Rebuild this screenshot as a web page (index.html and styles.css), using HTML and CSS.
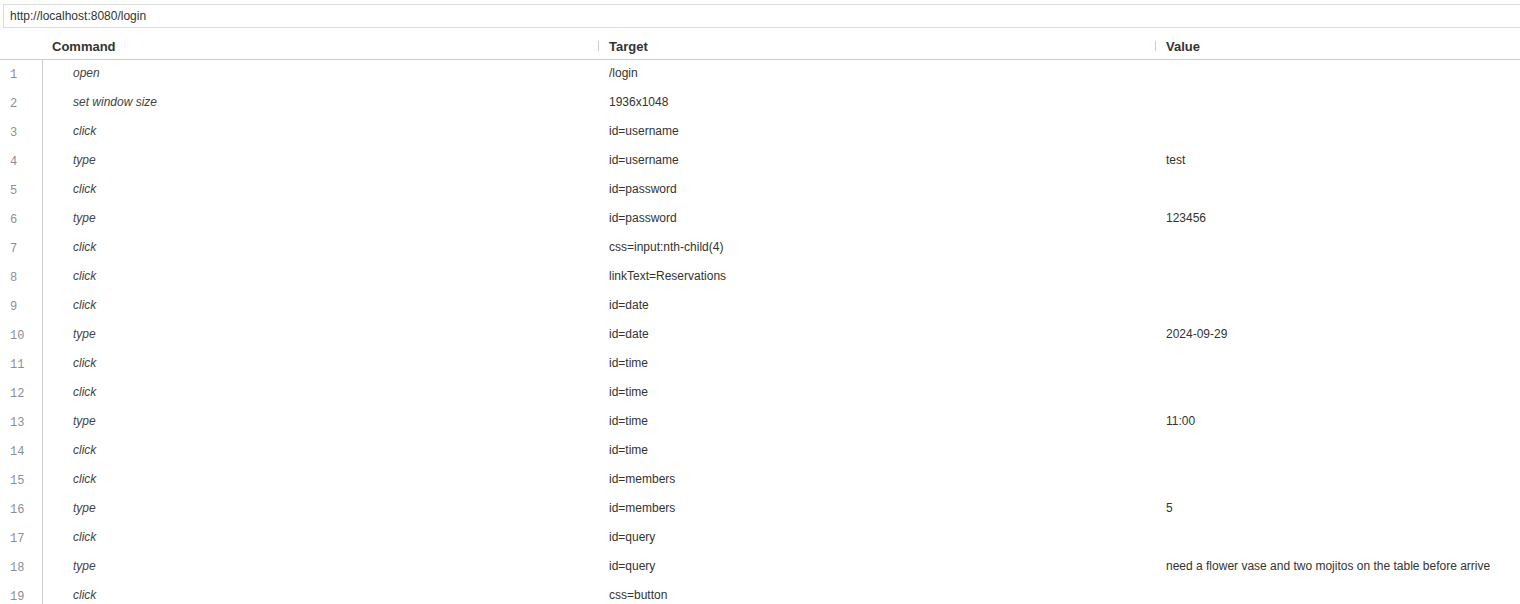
FILE: index.html
```html
<!DOCTYPE html>
<html>
<head>
<meta charset="utf-8">
<link rel="stylesheet" href="styles.css">
</head>
<body>
<div class="url">http://localhost:8080/login</div>
<div class="grid">
  <div class="row head">
    <div class="num"></div>
    <div class="cell c-cmd"><span class="lbl">Command</span></div>
    <div class="cell c-tgt"><span class="div"></span><span class="lbl">Target</span></div>
    <div class="cell c-val"><span class="div"></span><span class="lbl">Value</span></div>
  </div>
  <div class="row"><div class="num">1</div><div class="cell cmd">open</div><div class="cell tgt">/login</div><div class="cell val"></div></div>
  <div class="row"><div class="num">2</div><div class="cell cmd">set window size</div><div class="cell tgt">1936x1048</div><div class="cell val"></div></div>
  <div class="row"><div class="num">3</div><div class="cell cmd">click</div><div class="cell tgt">id=username</div><div class="cell val"></div></div>
  <div class="row"><div class="num">4</div><div class="cell cmd">type</div><div class="cell tgt">id=username</div><div class="cell val">test</div></div>
  <div class="row"><div class="num">5</div><div class="cell cmd">click</div><div class="cell tgt">id=password</div><div class="cell val"></div></div>
  <div class="row"><div class="num">6</div><div class="cell cmd">type</div><div class="cell tgt">id=password</div><div class="cell val">123456</div></div>
  <div class="row"><div class="num">7</div><div class="cell cmd">click</div><div class="cell tgt">css=input:nth-child(4)</div><div class="cell val"></div></div>
  <div class="row"><div class="num">8</div><div class="cell cmd">click</div><div class="cell tgt">linkText=Reservations</div><div class="cell val"></div></div>
  <div class="row"><div class="num">9</div><div class="cell cmd">click</div><div class="cell tgt">id=date</div><div class="cell val"></div></div>
  <div class="row"><div class="num">10</div><div class="cell cmd">type</div><div class="cell tgt">id=date</div><div class="cell val">2024-09-29</div></div>
  <div class="row"><div class="num">11</div><div class="cell cmd">click</div><div class="cell tgt">id=time</div><div class="cell val"></div></div>
  <div class="row"><div class="num">12</div><div class="cell cmd">click</div><div class="cell tgt">id=time</div><div class="cell val"></div></div>
  <div class="row"><div class="num">13</div><div class="cell cmd">type</div><div class="cell tgt">id=time</div><div class="cell val">11:00</div></div>
  <div class="row"><div class="num">14</div><div class="cell cmd">click</div><div class="cell tgt">id=time</div><div class="cell val"></div></div>
  <div class="row"><div class="num">15</div><div class="cell cmd">click</div><div class="cell tgt">id=members</div><div class="cell val"></div></div>
  <div class="row"><div class="num">16</div><div class="cell cmd">type</div><div class="cell tgt">id=members</div><div class="cell val">5</div></div>
  <div class="row"><div class="num">17</div><div class="cell cmd">click</div><div class="cell tgt">id=query</div><div class="cell val"></div></div>
  <div class="row"><div class="num">18</div><div class="cell cmd">type</div><div class="cell tgt">id=query</div><div class="cell val">need a flower vase and two mojitos on the table before arrive</div></div>
  <div class="row"><div class="num">19</div><div class="cell cmd">click</div><div class="cell tgt">css=button</div><div class="cell val"></div></div>
</div>
</body>
</html>
```
FILE: styles.css
```css
html, body {
  margin: 0;
  padding: 0;
  background: #fff;
  overflow: hidden;
}
body {
  font-family: "Liberation Sans", Arial, sans-serif;
  font-size: 12px;
  color: #333;
  width: 1520px;
  height: 604px;
}
.url {
  margin: 4px 0 0 3px;
  width: 1540px;
  height: 22px;
  line-height: 22px;
  border: 1px solid #ddd;
  padding-left: 6px;
  color: #333;
  font-size: 12px;
}
.grid {
  display: flex;
  flex-direction: column;
}
.row {
  display: grid;
  grid-template-columns: 43px 555px 557px 1fr;
  height: 29px;
}
.row.head {
  height: 31px;
  border-bottom: 1px solid #ccc;
}
.num {
  border-right: 1px solid #ccc;
  font-family: "Liberation Mono", monospace;
  font-size: 12px;
  color: #8a8f99;
  line-height: 28px;
  padding-left: 10px;
  padding-top: 1px;
  box-sizing: border-box;
}
.head .num {
  border-right: none;
}
.cell {
  line-height: 27px;
  white-space: nowrap;
  overflow: hidden;
}
.head .cell {
  display: flex;
  align-items: center;
  font-weight: bold;
  font-size: 13px;
  color: #333;
  padding-top: 5px;
  box-sizing: border-box;
}
.c-cmd { padding-left: 9px; }
.div {
  width: 1px;
  height: 10px;
  background: #ccc;
  margin-right: 10px;
}
.cmd {
  font-style: italic;
  padding-left: 30px;
  color: #444;
}
.tgt { padding-left: 11px; }
.val { padding-left: 11px; }
```
